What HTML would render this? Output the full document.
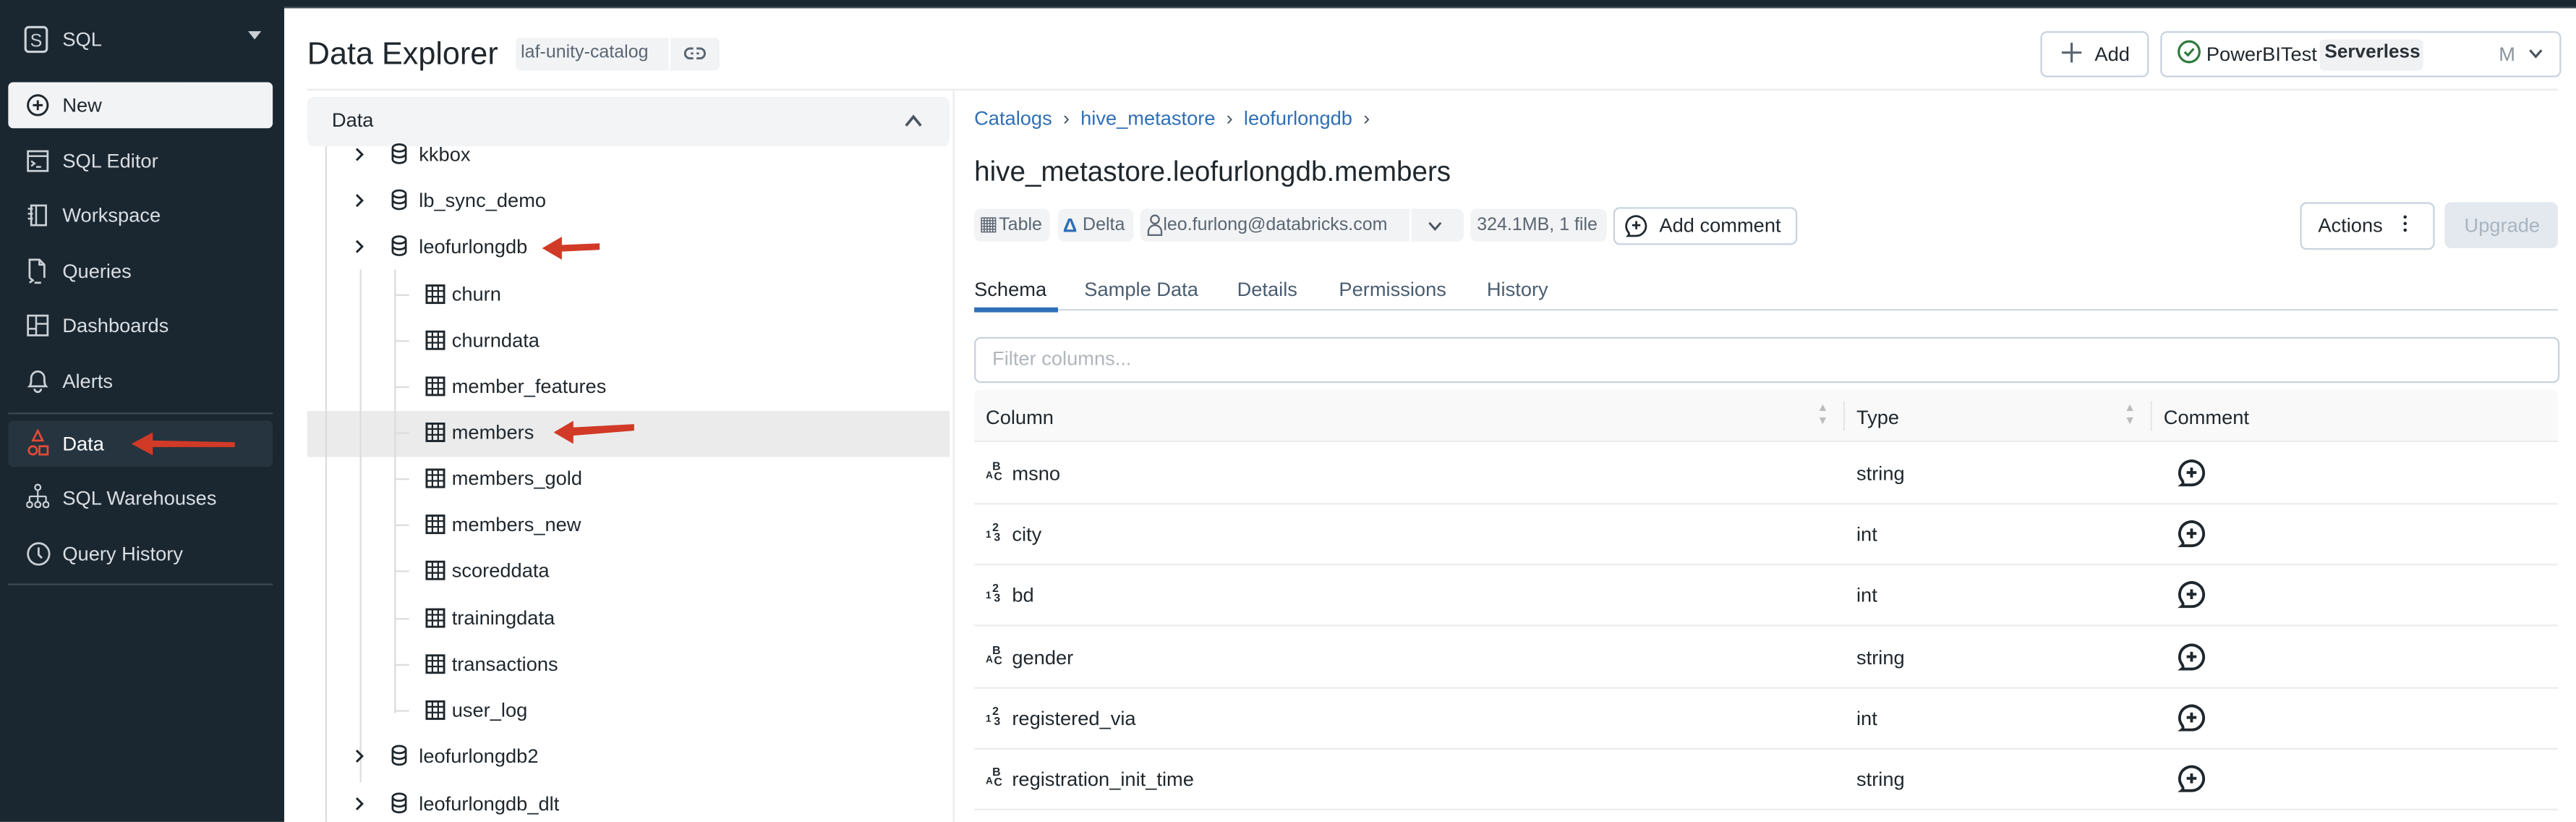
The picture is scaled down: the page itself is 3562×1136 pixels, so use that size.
<!DOCTYPE html>
<html><head><meta charset="utf-8"><style>
html,body{margin:0;padding:0;width:3562px;height:1134px;overflow:hidden;background:#fff}
#w{position:absolute;left:0;top:0;width:1568px;height:500px;transform:scale(2.27168);transform-origin:0 0;font-family:"Liberation Sans",sans-serif;color:#1f272d;font-size:12px}
.a{position:absolute;white-space:nowrap}
.sb{position:absolute;left:0;top:0;width:173px;height:500px;background:#1b2730}
.si{position:absolute;left:38px;color:#d9dee3;font-size:12px}
.ic{position:absolute;left:16px}
.hl{position:absolute;left:5px;width:161px;height:1px;background:#3b4852}
.tr{position:absolute;font-size:12px;color:#1f272d}
.g{position:absolute;background:#dcdcdc;width:1px}
.row{position:absolute;left:593px;width:964px;height:1px;background:#ececec}
.btn{position:absolute;border:1px solid #c9d3dd;border-radius:4px;background:#fff}
.chip{position:absolute;top:127px;height:20px;background:#f2f3f5;border-radius:4px;color:#5a6672;font-size:12px;line-height:20px}
</style></head><body><div id="w">
<div class="a" style="left:0;top:0;width:1568px;height:5px;background:#1b2730"></div>
<div class="a" style="left:0;top:4px;width:1568px;height:1px;background:#3d4a54"></div>
<div class="sb">
 <svg class="ic" style="left:14px;top:15px" width="16" height="18" viewBox="0 0 16 18"><rect x="1.5" y="1.5" width="13" height="15" rx="2" fill="none" stroke="#c9d0d6" stroke-width="1.4"/><text x="8" y="13.5" font-size="11" fill="#c9d0d6" text-anchor="middle" font-family="Liberation Sans">S</text></svg>
 <div class="si" style="top:17px">SQL</div>
 <div class="a" style="left:151px;top:19px;border-left:4px solid transparent;border-right:4px solid transparent;border-top:5px solid #c9d0d6"></div>
 <div class="hl" style="top:57px"></div>
 <div class="a" style="left:5px;top:50px;width:161px;height:28px;background:#f2f3f5;border-radius:3px"></div>
 <svg class="ic" style="top:57px" width="14" height="14" viewBox="0 0 14 14"><circle cx="7" cy="7" r="6" fill="none" stroke="#1f272d" stroke-width="1.3"/><path d="M7 4v6M4 7h6" stroke="#1f272d" stroke-width="1.3"/></svg>
 <div class="si" style="top:57px;color:#1f272d">New</div>
 <svg class="ic" style="top:91px" width="14" height="14" viewBox="0 0 14 14"><rect x="1" y="1" width="12" height="12" fill="none" stroke="#c9d0d6" stroke-width="1.2"/><path d="M1 4h12M3 7l2 1.5L3 10M6 10.5h3" stroke="#c9d0d6" stroke-width="1.1" fill="none"/></svg>
 <div class="si" style="top:91px">SQL Editor</div>
 <svg class="ic" style="top:124px" width="14" height="14" viewBox="0 0 14 14"><rect x="3" y="1" width="9" height="12" fill="none" stroke="#c9d0d6" stroke-width="1.2"/><path d="M1 3h3M1 6h3M1 9h3M6 1v12" stroke="#c9d0d6" stroke-width="1.1"/></svg>
 <div class="si" style="top:124px">Workspace</div>
 <svg class="ic" style="top:157px" width="14" height="16" viewBox="0 0 14 16"><path d="M2 12V1h6l3 3v8M8 1v3h3M2 12l2 1.5L2 15M5 15h4" stroke="#c9d0d6" stroke-width="1.2" fill="none"/></svg>
 <div class="si" style="top:158px">Queries</div>
 <svg class="ic" style="top:191px" width="14" height="14" viewBox="0 0 14 14"><rect x="1" y="1" width="12" height="12" fill="none" stroke="#c9d0d6" stroke-width="1.2"/><path d="M6 1v12M6 6h7M1 9h5" stroke="#c9d0d6" stroke-width="1.1"/></svg>
 <div class="si" style="top:191px">Dashboards</div>
 <svg class="ic" style="top:224px" width="14" height="16" viewBox="0 0 14 16"><path d="M2 11c1-1 1-3 1-5a4 4 0 0 1 8 0c0 2 0 4 1 5zM5 12.5a2 2 0 0 0 4 0" stroke="#c9d0d6" stroke-width="1.2" fill="none"/></svg>
 <div class="si" style="top:225px">Alerts</div>
 <div class="hl" style="top:251px"></div>
 <div class="a" style="left:5px;top:256px;width:161px;height:28px;background:#25343f;border-radius:3px"></div>
 <svg class="ic" style="top:261px" width="14" height="18" viewBox="0 0 14 18"><path d="M7 1l3 6H4z" stroke="#e64a36" stroke-width="1.2" fill="none"/><circle cx="4" cy="13" r="2.5" stroke="#e64a36" stroke-width="1.2" fill="none"/><rect x="8" y="10.5" width="5" height="5" stroke="#e64a36" stroke-width="1.2" fill="none"/></svg>
 <div class="si" style="top:263px;color:#fff">Data</div>
 <svg class="a" style="left:80px;top:262px" width="64" height="16" viewBox="0 0 64 16"><path d="M0 8L13 1v5l50 1v3l-50 0v5z" fill="#d13a27"/></svg>
 <svg class="ic" style="top:294px" width="14" height="16" viewBox="0 0 14 16"><circle cx="7" cy="2.5" r="1.7" stroke="#c9d0d6" fill="none"/><path d="M7 4v4M2 8h10M2 8v3M7 8v3M12 8v3" stroke="#c9d0d6" fill="none"/><circle cx="2" cy="13" r="1.7" stroke="#c9d0d6" fill="none"/><circle cx="7" cy="13" r="1.7" stroke="#c9d0d6" fill="none"/><circle cx="12" cy="13" r="1.7" stroke="#c9d0d6" fill="none"/></svg>
 <div class="si" style="top:296px">SQL Warehouses</div>
 <svg class="ic" style="top:329px" width="15" height="16" viewBox="0 0 15 16"><circle cx="7.5" cy="8" r="6.5" stroke="#c9d0d6" stroke-width="1.2" fill="none"/><path d="M7.5 4v4.5l2 2" stroke="#c9d0d6" stroke-width="1.2" fill="none"/></svg>
 <div class="si" style="top:330px">Query History</div>
 <div class="hl" style="top:355px"></div>
</div>

<div class="a" style="left:187px;top:23px;font-size:19px;color:#1f272d">Data Explorer</div>
<div class="a" style="left:314px;top:23px;width:124px;height:20px;background:#f2f3f5;border-radius:3px"></div>
<div class="a" style="left:407px;top:23px;width:1px;height:20px;background:#fff"></div>
<div class="a" style="left:317px;top:26px;font-size:11px;color:#5a6672">laf-unity-catalog</div>
<svg class="a" style="left:416px;top:27px" width="15" height="12" viewBox="0 0 15 12"><rect x="1" y="2.5" width="12" height="6" rx="3" fill="none" stroke="#5a6672" stroke-width="1.3"/><path d="M4.5 5.5h5" stroke="#5a6672" stroke-width="1.3"/><rect x="6" y="1" width="2" height="10" fill="#f2f3f5"/></svg>

<div class="btn" style="left:1242px;top:19px;width:64px;height:26px"></div>
<svg class="a" style="left:1254px;top:25px" width="14" height="14" viewBox="0 0 14 14"><path d="M7 1v12M1 7h12" stroke="#5a6672" stroke-width="1.4"/></svg>
<div class="a" style="left:1275px;top:26px;font-size:12px">Add</div>
<div class="btn" style="left:1315px;top:19px;width:242px;height:26px"></div>
<svg class="a" style="left:1325px;top:24px" width="15" height="15" viewBox="0 0 15 15"><circle cx="7.5" cy="7.5" r="6.3" stroke="#2e7a3c" stroke-width="1.4" fill="none"/><path d="M4.8 7.6l2 2 3.5-4" stroke="#2e7a3c" stroke-width="1.4" fill="none"/></svg>
<div class="a" style="left:1343px;top:26px;font-size:12px">PowerBITest</div>
<div class="a" style="left:1412px;top:24px;width:63px;height:19px;background:#f0f1f3;border-radius:3px"></div>
<div class="a" style="left:1415px;top:26px;font-size:11.5px;font-weight:bold;color:#2a3137">Serverless</div>
<div class="a" style="left:1521px;top:26px;font-size:12px;color:#8a949d">M</div>
<svg class="a" style="left:1539px;top:29px" width="9" height="7" viewBox="0 0 9 7"><path d="M1 1.5l3.5 4 3.5-4" stroke="#4a5560" stroke-width="1.4" fill="none"/></svg>

<div class="a" style="left:187px;top:54px;width:1370px;height:1px;background:#ebebeb"></div>
<div class="a" style="left:580px;top:55px;width:1px;height:445px;background:#ebebeb"></div>

<div class="a" style="left:187px;top:59px;width:391px;height:30px;background:#f3f4f6;border-radius:4px"></div>
<div class="a" style="left:202px;top:66px;font-size:12px">Data</div>
<svg class="a" style="left:550px;top:69px" width="12" height="9" viewBox="0 0 12 9"><path d="M1.5 7.5L6 2l4.5 5.5" stroke="#4a5560" stroke-width="1.6" fill="none"/></svg>

<div class="a" style="left:187px;top:250px;width:391px;height:28px;background:#ebebeb"></div>
<div class="g" style="left:198px;top:89px;height:411px"></div>
<div class="g" style="left:219px;top:164px;height:312px"></div>
<div class="g" style="left:240px;top:164px;height:270px"></div>

<div id="tree"></div>
<svg class="a" style="left:330px;top:143px" width="36" height="16" viewBox="0 0 36 16"><path d="M0 8L12 1v5l23-1v4l-23 1v5z" fill="#d13a27"/></svg>
<svg class="a" style="left:337px;top:255px" width="50" height="16" viewBox="0 0 50 16"><path d="M0 8L12 1v4l37-2v4l-37 3v5z" fill="#d13a27"/></svg>

<div class="a" style="left:593px;top:65px;font-size:12px;color:#2f6fb5">Catalogs <span style="color:#4a5560">&nbsp;›&nbsp;</span> hive_metastore <span style="color:#4a5560">&nbsp;›&nbsp;</span> leofurlongdb <span style="color:#4a5560">&nbsp;›</span></div>
<div class="a" style="left:593px;top:95px;font-size:17px">hive_metastore.leofurlongdb.members</div>

<div class="chip" style="left:593px;width:46px"><span style="position:absolute;left:3px;top:-1px">▦</span><span style="position:absolute;left:15px;font-size:11px">Table</span></div>
<div class="chip" style="left:644px;width:46px"><span style="position:absolute;left:3px;color:#2f6fb5;font-weight:bold">Δ</span><span style="position:absolute;left:15px;font-size:11px">Delta</span></div>
<div class="chip" style="left:694px;width:197px"><svg style="position:absolute;left:4px;top:3px" width="10" height="14" viewBox="0 0 10 14"><circle cx="5" cy="3.5" r="2.5" stroke="#5a6672" fill="none"/><path d="M1 13v-2a4 4 0 0 1 8 0v2z" stroke="#5a6672" fill="none"/></svg><span style="position:absolute;left:14px;font-size:11px">leo.furlong@databricks.com</span><span style="position:absolute;left:164px;top:0;width:1px;height:20px;background:#fff"></span><svg style="position:absolute;left:175px;top:7px" width="9" height="7" viewBox="0 0 9 7"><path d="M1 1.5l3.5 4 3.5-4" stroke="#4a5560" stroke-width="1.3" fill="none"/></svg></div>
<div class="chip" style="left:895px;width:83px"><span style="position:absolute;left:4px;font-size:11px">324.1MB, 1 file</span></div>
<div class="btn" style="left:982px;top:126px;width:110px;height:21px"></div>
<svg class="a" style="left:989px;top:130px" width="14" height="15" viewBox="0 0 14 15"><path d="M2 13.5c1-1 .6-1.6 0-2.5A6 6 0 1 1 7 13.5z" stroke="#1f272d" stroke-width="1.2" fill="none"/><path d="M7 4.5v5M4.5 7h5" stroke="#1f272d" stroke-width="1.2"/></svg>
<div class="a" style="left:1010px;top:130px;font-size:12px">Add comment</div>

<div class="btn" style="left:1400px;top:123px;width:80px;height:27px"></div>
<div class="a" style="left:1411px;top:130px;font-size:12px">Actions</div>
<div class="a" style="left:1463px;top:131px;width:2px;height:2px;background:#1f272d;border-radius:1px;box-shadow:0 4px 0 #1f272d,0 8px 0 #1f272d"></div>
<div class="a" style="left:1488px;top:123px;width:69px;height:28px;background:#e3e9ef;border-radius:4px"></div>
<div class="a" style="left:1500px;top:130px;font-size:12px;color:#a9b4c0">Upgrade</div>

<div class="a" style="left:593px;top:169px;font-size:12px;color:#1f272d">Schema</div>
<div class="a" style="left:660px;top:169px;font-size:12px;color:#4a5d70">Sample Data</div>
<div class="a" style="left:753px;top:169px;font-size:12px;color:#4a5d70">Details</div>
<div class="a" style="left:815px;top:169px;font-size:12px;color:#4a5d70">Permissions</div>
<div class="a" style="left:905px;top:169px;font-size:12px;color:#4a5d70">History</div>
<div class="a" style="left:593px;top:188px;width:964px;height:1px;background:#d1d9e1"></div>
<div class="a" style="left:593px;top:187px;width:51px;height:3px;background:#2f6fb5"></div>

<div class="btn" style="left:593px;top:205px;width:963px;height:26px"></div>
<div class="a" style="left:604px;top:211px;font-size:12px;color:#b0b6bc">Filter columns...</div>

<div class="a" style="left:593px;top:237px;width:964px;height:31px;background:#f9f9f9;border-radius:4px 4px 0 0"></div>
<div class="a" style="left:1122px;top:244px;width:1px;height:18px;background:#e6e6e6"></div>
<div class="a" style="left:1309px;top:244px;width:1px;height:18px;background:#e6e6e6"></div>
<div class="a" style="left:600px;top:247px;font-size:12px">Column</div>
<div class="a" style="left:1106px;top:245px;font-size:7px;color:#bcbcbc;line-height:8px">▲<br>▼</div>
<div class="a" style="left:1130px;top:247px;font-size:12px">Type</div>
<div class="a" style="left:1293px;top:245px;font-size:7px;color:#bcbcbc;line-height:8px">▲<br>▼</div>
<div class="a" style="left:1317px;top:247px;font-size:12px">Comment</div>
<div class="row" style="top:268px;background:#ebebeb"></div>
<div id="rows"></div>
</div>
<script>
var t=[["c",94,"kkbox"],["c",122,"lb_sync_demo"],["c",150,"leofurlongdb"],["t",179,"churn"],["t",207,"churndata"],["t",235,"member_features"],["t",263,"members"],["t",291,"members_gold"],["t",319,"members_new"],["t",347,"scoreddata"],["t",376,"trainingdata"],["t",404,"transactions"],["t",432,"user_log"],["c",460,"leofurlongdb2"],["c",489,"leofurlongdb_dlt"]];
var h="";
t.forEach(function(r){var y=r[1];
if(r[0]=="c"){h+='<svg class="a" style="left:215px;top:'+(y-5)+'px" width="8" height="10" viewBox="0 0 8 10"><path d="M2 1.5l3.5 3.5L2 8.5" stroke="#1f272d" stroke-width="1.3" fill="none"/></svg>';
h+='<svg class="a" style="left:238px;top:'+(y-7)+'px" width="10" height="13" viewBox="0 0 10 13"><ellipse cx="5" cy="3" rx="4" ry="2.2" stroke="#1f272d" stroke-width="1.2" fill="none"/><path d="M1 3v7c0 1.2 1.8 2.2 4 2.2s4-1 4-2.2V3M1 6.5c0 1.2 1.8 2.2 4 2.2s4-1 4-2.2" stroke="#1f272d" stroke-width="1.2" fill="none"/></svg>';
h+='<div class="tr" style="left:255px;top:'+(y-7)+'px">'+r[2]+'</div>';}
else{h+='<div class="a" style="left:241px;top:'+y+'px;width:8px;height:1px;background:#dcdcdc"></div>';
h+='<svg class="a" style="left:259px;top:'+(y-6)+'px" width="12" height="12" viewBox="0 0 12 12"><rect x="0.7" y="0.7" width="10.6" height="10.6" fill="none" stroke="#1f272d" stroke-width="1.3"/><path d="M0.7 4h10.6M0.7 7.5h10.6M4.2 .7v10.6M7.7 .7v10.6" stroke="#1f272d" stroke-width="1"/></svg>';
h+='<div class="tr" style="left:275px;top:'+(y-7)+'px">'+r[2]+'</div>';}});
document.getElementById("tree").outerHTML=h;
var c=[["s","msno","string"],["i","city","int"],["i","bd","int"],["s","gender","string"],["i","registered_via","int"],["s","registration_init_time","string"]];
var g="";
c.forEach(function(r,i){var y=288+i*37.2;
var ic=r[0]=="s"?'<span style="font-size:6px;position:absolute;left:0;top:5px;font-weight:bold">A</span><span style="font-size:7px;position:absolute;left:4px;top:-1px;font-weight:bold">B</span><span style="font-size:7px;position:absolute;left:5px;top:5px;font-weight:bold">C</span>':'<span style="font-size:6px;position:absolute;left:0;top:4px;font-weight:bold">1</span><span style="font-size:7px;position:absolute;left:4px;top:-1px;font-weight:bold">2</span><span style="font-size:7px;position:absolute;left:5px;top:5px;font-weight:bold">3</span>';
g+='<div class="a" style="left:600px;top:'+(y-6)+'px;width:10px;height:14px">'+ic+'</div>';
g+='<div class="a" style="left:616px;top:'+(y-7)+'px">'+r[1]+'</div>';
g+='<div class="a" style="left:1130px;top:'+(y-7)+'px">'+r[2]+'</div>';
g+='<svg class="a" style="left:1325px;top:'+(y-9)+'px" width="18" height="18" viewBox="0 0 18 18"><path d="M3 16c1.3-1 .8-2 0-3.2A7.3 7.3 0 1 1 9 16z" stroke="#1f272d" stroke-width="1.7" fill="none"/><path d="M9 5.5v6M6 8.5h6" stroke="#1f272d" stroke-width="1.7"/></svg>';
g+='<div class="row" style="top:'+(y+18)+'px"></div>';});
document.getElementById("rows").outerHTML=g;
</script>
</body></html>
